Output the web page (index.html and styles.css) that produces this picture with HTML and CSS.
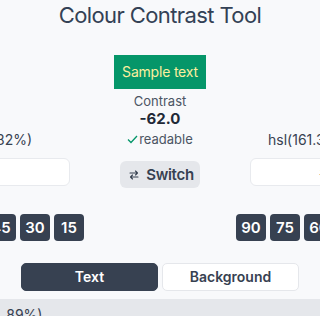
FILE: index.html
```html
<!DOCTYPE html>
<html lang="en">
<head>
    <meta charset="UTF-8">
    <meta name="viewport" content="width=device-width, initial-scale=1.0">
    <title>Colour Contrast Tool</title>
    <link rel="stylesheet" href="styles.css">
</head>
<body>
    <h1>Colour Contrast Tool</h1>

    <div class="preview">
        <div class="sample">Sample text</div>
    </div>

    <div class="picker-row">
        <div class="colour-col">
            <div class="colour-label">hsl(50, 92%, 82%)</div>
            <input class="hex-input" type="text" value="#fcef9f">
            <div class="chips chips-left">
                <span class="chip">90</span>
                <span class="chip">75</span>
                <span class="chip">60</span>
                <span class="chip">45</span>
                <span class="chip">30</span>
                <span class="chip">15</span>
            </div>
        </div>

        <div class="middle-col">
            <div class="contrast-label">Contrast</div>
            <div class="contrast-value">-62.0</div>
            <div class="readable">
                <svg width="11" height="9" viewBox="0 0 11 9"><polyline points="1,4.5 4,7.5 10,1" fill="none" stroke="#059669" stroke-width="1.3"/></svg>
                readable
            </div>
            <button class="switch-btn">
                <svg width="12" height="12" viewBox="0 0 24 24" fill="none" stroke="#374151" stroke-width="2.2" stroke-linecap="round" stroke-linejoin="round">
                    <path d="M4 8h15M15 4l4 4-4 4M20 16H5M9 12l-4 4 4 4"/>
                </svg>
                Switch
            </button>
        </div>

        <div class="colour-col">
            <div class="colour-label">hsl(161.3, 93.8%, 30.2%)</div>
            <input class="hex-input" type="text" value="#059669">
            <div class="chips chips-right">
                <span class="chip">90</span>
                <span class="chip">75</span>
                <span class="chip">60</span>
                <span class="chip">45</span>
                <span class="chip">30</span>
                <span class="chip">15</span>
            </div>
        </div>
    </div>

    <div class="tabs">
        <div class="tab active">Text</div>
        <div class="tab">Background</div>
    </div>

    <div class="history">
        <div class="history-item">hsl(50.0, 92.1%, 89%)</div>
        <div class="history-item"></div>
    </div>
</body>
</html>
```

FILE: styles.css
```css
* {
    margin: 0;
    padding: 0;
    box-sizing: border-box;
    font-family: 'Inter', 'Noto Sans', sans-serif;
}

body {
    background-color: #f8f9fb;
    color: #334155;
    overflow: hidden;
}

h1 {
    font-size: 22px;
    font-weight: 400;
    letter-spacing: -0.6px;
    line-height: 30px;
    text-align: center;
    color: #334155;
}

.preview {
    display: flex;
    justify-content: center;
    margin-top: 25px;
}

.sample {
    background-color: #059669;
    color: #fcef9f;
    font-size: 14px;
    letter-spacing: -0.2px;
    height: 34px;
    line-height: 34px;
    padding: 0 8px;
}

.picker-row {
    display: grid;
    grid-template-columns: 200px 80px 200px;
    column-gap: 50px;
    justify-content: center;
}

.colour-col {
    display: flex;
    flex-direction: column;
    align-items: center;
}

.colour-label {
    margin-top: 41px;
    font-size: 14px;
    line-height: 20px;
    color: #374151;
    white-space: nowrap;
}

.hex-input {
    width: 200px;
    height: 28px;
    margin-top: 8px;
    border: 1px solid #e8eaee;
    border-radius: 6px;
    background: #fff;
    text-align: center;
    font-size: 14px;
    color: #374151;
    outline: none;
}

.chips {
    display: flex;
    gap: 4px;
    width: 228px;
    margin-top: 28px;
}

.chips-left {
    justify-content: flex-end;
}

.chips-right {
    justify-content: flex-start;
}

.chip {
    background-color: #374151;
    color: #fff;
    font-weight: 600;
    font-size: 15px;
    height: 27px;
    line-height: 27px;
    min-width: 30px;
    padding: 0 5px;
    text-align: center;
    border-radius: 4px;
}

.middle-col {
    display: flex;
    flex-direction: column;
    align-items: center;
    white-space: nowrap;
}

.contrast-label {
    margin-top: 3px;
    font-size: 13px;
    line-height: 18px;
    color: #4b5563;
}

.contrast-value {
    font-size: 15px;
    font-weight: 700;
    line-height: 18px;
    color: #1f2937;
}

.readable {
    margin-top: 2px;
    font-size: 13px;
    line-height: 18px;
    color: #4b5563;
    display: flex;
    align-items: center;
    gap: 1px;
}

.switch-btn {
    margin-top: 13px;
    height: 27px;
    padding: 0 6px 0 8px;
    border: none;
    border-radius: 6px;
    background-color: #e5e7eb;
    color: #374151;
    font-size: 15px;
    font-weight: 600;
    letter-spacing: -0.3px;
    display: flex;
    align-items: center;
    gap: 6px;
}

.tabs {
    display: flex;
    justify-content: center;
    gap: 4px;
    margin-top: 22px;
}

.tab {
    width: 137px;
    height: 28px;
    line-height: 26px;
    text-align: center;
    font-size: 14px;
    font-weight: 600;
    color: #374151;
    background: #fff;
    border: 1px solid #e5e7eb;
    border-radius: 5px;
}

.tab.active {
    background-color: #374151;
    border-color: #374151;
    color: #fff;
}

.history {
    display: grid;
    grid-template-columns: 200px 200px;
    column-gap: 180px;
    justify-content: center;
    margin-top: 8px;
    background-color: #e5e7eb;
    height: 40px;
    padding-top: 7px;
}

.history-item {
    text-align: center;
    font-size: 14px;
    white-space: nowrap;
    color: #374151;
}
```
